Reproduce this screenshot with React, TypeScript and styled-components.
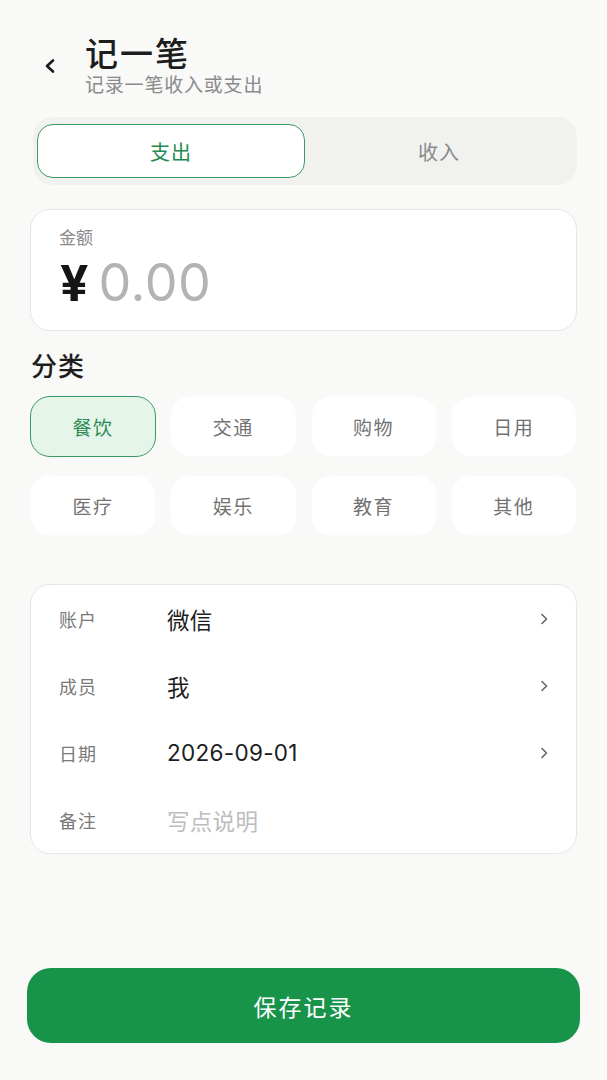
import React, { useState } from 'react';
import styled, { createGlobalStyle } from 'styled-components';

const GlobalStyle = createGlobalStyle`
	* {
		box-sizing: border-box;
	}

	body {
		margin: 0;
		background: #f9f9f8;
		font-family: Inter, 'Noto Sans CJK SC', 'Noto Sans', sans-serif;
		color: #1d1d1d;
	}
`;

const categories = ['餐饮', '交通', '购物', '日用', '医疗', '娱乐', '教育', '其他'];

const fields = [
	{ label: '账户', value: '微信', arrow: true },
	{ label: '成员', value: '我', arrow: true },
	{ label: '日期', value: '2026-09-01', arrow: true },
	{ label: '备注', value: '写点说明', arrow: false, placeholder: true },
];

const App = () => {
	const [type, setType] = useState<'out' | 'in'>('out');
	const [category, setCategory] = useState('餐饮');

	return (
		<Page>
			<GlobalStyle />
			<Header>
				<BackButton aria-label='返回'>
					<svg width='14' height='16' viewBox='0 0 14 16' fill='none'>
						<path
							d='M10 2.5 L4 8 L10 13.5'
							stroke='#1a1a1a'
							strokeWidth='2.6'
							strokeLinecap='round'
							strokeLinejoin='round'
						/>
					</svg>
				</BackButton>
				<HeaderText>
					<Title>记一笔</Title>
					<Subtitle>记录一笔收入或支出</Subtitle>
				</HeaderText>
			</Header>

			<Segment>
				<SegmentTab $active={type === 'out'} onClick={() => setType('out')}>
					支出
				</SegmentTab>
				<SegmentTab $active={type === 'in'} onClick={() => setType('in')}>
					收入
				</SegmentTab>
			</Segment>

			<AmountCard>
				<CardLabel>金额</CardLabel>
				<AmountRow>
					<Currency>¥</Currency>
					<AmountValue>0.00</AmountValue>
				</AmountRow>
			</AmountCard>

			<SectionTitle>分类</SectionTitle>
			<CategoryGrid>
				{categories.map((c) => (
					<Chip key={c} $active={c === category} onClick={() => setCategory(c)}>
						{c}
					</Chip>
				))}
			</CategoryGrid>

			<InfoCard>
				{fields.map((f) => (
					<InfoRow key={f.label}>
						<InfoLabel>{f.label}</InfoLabel>
						<InfoValue $placeholder={f.placeholder}>{f.value}</InfoValue>
						{f.arrow && (
							<svg width='10' height='14' viewBox='0 0 10 14' fill='none'>
								<path
									d='M3 2.5 L7.5 7 L3 11.5'
									stroke='#666'
									strokeWidth='1.6'
									strokeLinecap='round'
									strokeLinejoin='round'
								/>
							</svg>
						)}
					</InfoRow>
				))}
			</InfoCard>

			<Spacer />
			<SaveButton>保存记录</SaveButton>
		</Page>
	);
};

const Page = styled.main`
	width: 607px;
	min-height: 1080px;
	padding: 34px 30px 37px 30px;

	display: flex;
	flex-direction: column;
`;

const Header = styled.header`
	display: flex;
	align-items: flex-start;
	gap: 28px;
	padding-left: 13px;
`;

const BackButton = styled.button`
	margin-top: 24px;
	padding: 0;
	border: none;
	background: none;

	display: flex;
`;

const HeaderText = styled.div`
	display: flex;
	flex-direction: column;
`;

const Title = styled.h1`
	margin: 0;

	font-size: 33px;
	font-weight: 500;
	line-height: 40px;
	letter-spacing: 2px;
`;

const Subtitle = styled.p`
	margin: 0;

	color: #8a8a8a;
	font-size: 19px;
	line-height: 24px;
	letter-spacing: 0.8px;
`;

const Segment = styled.div`
	margin: 19px 0 0 3px;
	padding: 7px 4px;
	height: 68px;

	background: #f1f1f0;
	border-radius: 20px;

	display: grid;
	grid-template-columns: 1fr 1fr;
`;

const SegmentTab = styled.button<{ $active?: boolean }>`
	border: 1px solid ${({ $active }) => ($active ? '#3c9a66' : 'transparent')};
	border-radius: 16px;
	background: ${({ $active }) => ($active ? '#fff' : 'transparent')};

	color: ${({ $active }) => ($active ? '#23894f' : '#8a8a8a')};
	font-family: inherit;
	font-size: 20px;
	letter-spacing: 1px;
`;

const AmountCard = styled.section`
	margin-top: 24px;
	padding: 16px 28px 0;
	height: 122px;

	background: #fff;
	border: 1px solid #e6e6e6;
	border-radius: 20px;

	display: flex;
	flex-direction: column;
	gap: 4px;
`;

const CardLabel = styled.span`
	color: #8a8a8a;
	font-size: 17px;
	line-height: 24px;
`;

const AmountRow = styled.div`
	display: flex;
	align-items: baseline;
	gap: 10px;
	padding-left: 1px;
`;

const Currency = styled.span`
	color: #151515;
	font-size: 50px;
	font-weight: 700;
	line-height: 58px;
`;

const AmountValue = styled.span`
	color: #b3b3b3;
	font-size: 52px;
	font-weight: 400;
	line-height: 58px;
	letter-spacing: 0.5px;
`;

const SectionTitle = styled.h2`
	margin: 18px 0 0 1px;

	font-size: 26px;
	font-weight: 500;
	line-height: 36px;
	letter-spacing: 1px;
`;

const CategoryGrid = styled.div`
	margin-top: 11px;

	display: grid;
	grid-template-columns: repeat(4, 1fr);
	column-gap: 14px;
	row-gap: 18px;
`;

const Chip = styled.button<{ $active?: boolean }>`
	height: 61px;

	background: ${({ $active }) => ($active ? '#e6f5ea' : '#fff')};
	border: 1px solid ${({ $active }) => ($active ? '#3c9a66' : '#fbfbfb')};
	border-radius: 20px;

	color: ${({ $active }) => ($active ? '#2a8a53' : '#727272')};
	font-family: inherit;
	font-size: 19px;
	letter-spacing: 1.5px;
`;

const InfoCard = styled.section`
	margin-top: 48px;
	padding: 0 27px 0 28px;

	background: #fff;
	border: 1px solid #e6e6e6;
	border-radius: 20px;

	display: flex;
	flex-direction: column;
`;

const InfoRow = styled.div`
	height: 67px;

	display: flex;
	align-items: center;
`;

const InfoLabel = styled.span`
	width: 108px;

	color: #7a7a7a;
	font-size: 18px;
	letter-spacing: 1px;
`;

const InfoValue = styled.span<{ $placeholder?: boolean }>`
	flex: 1;

	color: ${({ $placeholder }) => ($placeholder ? '#bdbdbd' : '#1d1d1d')};
	font-size: 22.5px;
	letter-spacing: 0.3px;
`;

const Spacer = styled.div`
	flex: 1;
`;

const SaveButton = styled.button`
	margin: 0 -3px;
	height: 75px;

	background: #17934a;
	border: none;
	border-radius: 24px;

	color: #fff;
	font-family: inherit;
	font-size: 23px;
	letter-spacing: 2px;
`;

export default App;
